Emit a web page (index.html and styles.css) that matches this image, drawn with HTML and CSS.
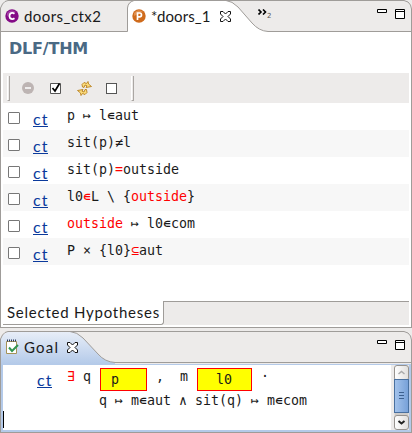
FILE: index.html
```html
<!DOCTYPE html>
<html lang="en">
<head>
<meta charset="utf-8">
<title>doors_1</title>
<link rel="stylesheet" href="styles.css">
</head>
<body>
<section class="pane editor">
  <header class="tabbar">
    <svg class="tabshape" width="412" height="33" viewBox="0 0 412 33">
      <path d="M.5 32V8L2.500 4L5 1.500L8 .5H404L408 2L410.500 5L411.500 9V32Z" fill="#edebea"/>
      <path d="M128 33V7L129.500 4L134 .5H226Q232 1 238 7L252 23Q259 31 268 31.500V33Z" fill="#fff"/>
      <path d="M.5 33V8L2.500 4L5 1.500L8 .5H404L408 2L410.500 5L411.500 9V33M1 31.500H127.500V8Q128 2 134 .5H226Q232 1 238 7L252 23Q259 31 268 31.500H411" fill="none" stroke="#9f9c99"/>
    </svg>
    <div class="tab first"><svg width="14" height="14" viewBox="0 0 14 14"><circle cx="7" cy="7" r="6.700" fill="#840b86"/><path d="M2 4Q6-1 11 3Q7 4 2 7Z" fill="#b65db8" opacity=".6"/><path d="M9.500 4.700Q7 3 5 5Q3.800 7 5 9Q7 11 9.500 9.300" fill="none" stroke="#fff" stroke-width="1.800"/></svg><span class="name ctx">doors_ctx2</span></div>
    <div class="tab second"><svg width="14" height="14" viewBox="0 0 14 14"><circle cx="7" cy="7" r="6.700" fill="#cf6b1c"/><path d="M2 4Q6-1 11 3Q7 4 2 7Z" fill="#eba873" opacity=".6"/><path d="M5.500 11V4H7.500Q9.500 4 9.500 5.900Q9.500 7.800 7.500 7.800H6" fill="none" stroke="#fff" stroke-width="1.700"/></svg><span class="name machine">*doors_1</span>
      <svg class="close" width="11" height="11" viewBox="0 0 11 11"><path d="M.5.500H3L5.500 3L8 .5H10.500V3L8 5.500L10.500 8V10.500H8L5.500 8L3 10.500H.5V8L3 5.500L.5 3Z" fill="#fff" stroke="#111"/></svg></div>
    <div class="more"><svg width="9" height="6" viewBox="0 0 9 6"><path d="M.5.500L3 3L.5 5.500M5 .5L7.500 3L5 5.500" fill="none" stroke="#000" stroke-width="1.600"/></svg><span>2</span></div>
    <svg class="controls" width="28" height="10" viewBox="0 0 28 10" fill="#fff" stroke="#000"><path d="M.5.500H9.500V3.500H.5ZM18.500.500H27.500V9.500H18.500ZM18.500 2.500H27.500"/></svg>
  </header>
  <div class="editor-body">
    <h1>DLF/THM</h1>
    <div class="toolbar">
      <i class="handle"></i>
      <svg class="minus" width="12" height="12" viewBox="0 0 12 12"><circle cx="6" cy="6" r="6" fill="#bdb4b3"/><path d="M3 6H9" stroke="#efeded" stroke-width="2"/></svg>
      <svg class="checked" width="12" height="12" viewBox="0 0 12 12"><path d="M.5 1.500H10.500V11.500H.5Z" fill="#fff" stroke="#555"/><path d="M2.500 6L5 9L9.500 1.500" fill="none" stroke="#000" stroke-width="1.700"/></svg>
      <svg class="refresh" width="15" height="15" viewBox="0 0 15 15" fill="#fbdc7c" stroke="#b9801d" stroke-width=".9"><path d="M5.500 6L5 3.500L7 1.500L9.500 2.500L11 .5L11.500 3L14.500 5.500L9 6.500L10 4.800L8 4L7 6.500Z"/><path d="M9.500 8.500L10 11.500L8 13.500L5.500 12.500L4 14.500L3.500 12L.5 9.500L6 8.500L5 10.200L7 11L8 8.500Z"/></svg>
      <i class="empty"></i>
      <i class="handle"></i>
    </div>
    <ul class="hyps">
      <li><i class="box"></i><a>ct</a><code>p ↦ l∊aut</code></li>
      <li><i class="box"></i><a>ct</a><code>sit(p)≠l</code></li>
      <li><i class="box"></i><a>ct</a><code>sit(p)<b>=</b>outside</code></li>
      <li><i class="box"></i><a>ct</a><code>l0<b>∊</b>L \ {<b>outside</b>}</code></li>
      <li><i class="box"></i><a>ct</a><code><b>outside</b> ↦ l0∊com</code></li>
      <li><i class="box"></i><a>ct</a><code>P × {l0}<b>⊆</b>aut</code></li>
    </ul>
    <footer class="pages"><span class="page">Selected Hypotheses</span><span class="rest"></span></footer>
  </div>
</section>
<section class="pane goal">
  <header class="tabbar">
    <svg class="tabshape" width="412" height="33" viewBox="0 0 412 33">
      <defs><linearGradient id="blue" x1="0" y1="0" x2="0" y2="1"><stop offset="0" stop-color="#e8eef8"/><stop offset="1" stop-color="#b4cae9"/></linearGradient></defs>
      <path d="M.5 33V8L2.500 4L5 1.500L8 .5H404L408 2L410.500 5L411.500 9V33Z" fill="#edebea"/>
      <path d="M1 33V8L3 4L8 .5H70Q77 1 83 7L98 23Q105 31 115 31.500V33Z" fill="url(#blue)"/>
      <path d="M.5 33V8L2.500 4L5 1.500L8 .5H404L408 2L410.500 5L411.500 9V33M70 .5Q77 1 83 7L98 23Q105 31 115 31.500H411" fill="none" stroke="#9f9c99"/>
    </svg>
    <div class="tab first"><svg class="note" width="13" height="16" viewBox="0 0 13 16"><path d="M.5 2.500H10.500V14.500H.5Z" fill="#fff" stroke="#a59358"/><path d="M1 1.500H11" stroke="#26375f" stroke-width="2" stroke-dasharray="1 1"/><path d="M3 8.500L6 12L12 6" fill="none" stroke="#319551" stroke-width="2"/></svg><span class="name goalname">Goal</span>
      <svg class="close" width="11" height="11" viewBox="0 0 11 11"><path d="M.5.500H3L5.500 3L8 .5H10.500V3L8 5.500L10.500 8V10.500H8L5.500 8L3 10.500H.5V8L3 5.500L.5 3Z" fill="#fff" stroke="#111"/></svg></div>
    <svg class="controls" width="28" height="10" viewBox="0 0 28 10" fill="#fff" stroke="#000"><path d="M.5.500H9.500V3.500H.5ZM18.500.500H27.500V9.500H18.500ZM18.500 2.500H27.500"/></svg>
  </header>
  <div class="goal-body">
    <div class="formula">
      <div class="line one"><a>ct</a><code><b>∃</b> q</code><span class="inst p">p</span><code class="comma">,</code><code class="m">m</code><span class="inst l0">l0</span><code class="dot">·</code></div>
      <div class="line two"><code>q ↦ m∊aut ∧ sit(q) ↦ m∊com</code></div>
      <i class="caret"></i>
    </div>
    <div class="scroll">
      <svg width="15" height="65" viewBox="0 0 15 65"><defs><linearGradient id="thumb"><stop offset="0" stop-color="#a5c4ec"/><stop offset="1" stop-color="#76a0d8"/></linearGradient><linearGradient id="btn"><stop offset="0" stop-color="#fff"/><stop offset="1" stop-color="#e1dfdd"/></linearGradient></defs>
      <path d="M.5 5H14.500V60H.5Z" fill="#d0cdca"/>
      <rect x=".5" y=".5" width="14" height="15" rx="2.500" fill="url(#btn)" stroke="#96928e"/>
      <rect x=".5" y="50.500" width="14" height="14" rx="2.500" fill="url(#btn)" stroke="#96928e"/>
      <rect x=".5" y="14.500" width="14" height="33" fill="url(#thumb)" stroke="#49709f"/>
      <path d="M5 27.500H10M5 30.500H10M5 33.500H10" stroke="#3c608f"/>
      <path d="M4.500 9L7.500 6.500L10.500 9" fill="none" stroke="#aaa" stroke-width="1.500"/><path d="M4.500 56L7.500 58.500L10.500 56" fill="none" stroke="#222" stroke-width="2"/></svg>
    </div>
  </div>
</section>
</body>
</html>
```
FILE: styles.css
```css
* { box-sizing: border-box; }
body {
  margin: 0;
  width: 412px;
  height: 433px;
  overflow: hidden;
  background: #edebea;
  color: #1a1a1a;
  font-family: Lato, "Liberation Sans", sans-serif;
}
svg { display: block; flex: none; }
.pane { width: 412px; }
.tabbar { position: relative; height: 32px; display: flex; }
.tabshape { position: absolute; left: 0; top: 0; }
.tab { position: relative; display: flex; align-items: center; height: 32px; }
.first { width: 127px; padding-left: 5px; }
.second { width: 130px; padding-left: 5px; }
.name { font-size: 15px; line-height: 20px; white-space: nowrap; }
.ctx { margin-left: 5px; letter-spacing: .45px; }
.machine { width: 60px; margin-left: 5px; letter-spacing: .1px; }
.second .close { margin-left: 9px; }
.more { position: relative; display: flex; padding: 9px 0 0 1px; }
.more span { font: 7px/10px "DejaVu Sans", sans-serif; padding-top: 2px; color: #555; }
.controls { position: relative; margin: 9px 7px 0 auto; }

.editor { height: 331px; }
.editor-body {
  height: 296px;
  display: flex;
  flex-direction: column;
  border: solid #9f9c99;
  border-width: 0 1px 1px;
  background: #fff;
  padding: 0 2px 2px;
}
h1 {
  margin: 0;
  height: 41px;
  padding: 7px 0 0 6px;
  font: bold 16px/20px "DejaVu Sans", sans-serif;
  letter-spacing: -.2px;
  color: #4a6984;
}
.toolbar {
  height: 30px;
  flex: none;
  display: flex;
  align-items: center;
  background: #edebea;
}
.handle {
  width: 3px;
  height: 25px;
  margin-left: 4px;
  border: 1px solid #aaa6a3;
  border-left-color: #fff;
  border-top: 0;
}
.minus { margin-left: 12px; }
.checked { margin-left: 16px; }
.refresh { margin-left: 15px; }
.empty { width: 11px; height: 11px; margin-left: 14px; border: 1px solid #555; background: #fff; }
.empty + .handle { margin-left: 14px; }
.hyps { margin: 0; padding: 0; list-style: none; }
.hyps li { height: 27px; display: flex; }
.hyps li:nth-child(even) { background: #f7f7f7; }
.box {
  width: 12px;
  height: 12px;
  margin: 9px 13px 0 5px;
  border: 1px solid #777;
  border-radius: 1px;
  background: #fff;
}
a {
  width: 15px;
  height: 18px;
  font-size: 16px;
  line-height: 19px;
  letter-spacing: 1px;
  white-space: nowrap;
  color: #0b3a9c;
  border-bottom: 1px solid #0b3a9c;
}
.hyps a { margin: 6px 19px 0 0; }
code {
  font: 13.3px/18px "DejaVu Sans Mono", monospace;
  letter-spacing: -.007px;
  white-space: pre;
}
.hyps code { padding-top: 4px; }
b { font-weight: normal; color: #f00; }
.pages { height: 24px; margin-top: auto; display: flex; }
.page {
  width: 161px;
  padding-left: 4px;
  font-size: 15px;
  line-height: 22px;
  letter-spacing: .76px;
  white-space: nowrap;
  border: solid #9f9c99;
  border-width: 0 1px 1px 0;
  border-radius: 0 0 3px 0;
}
.rest { flex: 1; background: #edebea; border-top: 1px solid #9f9c99; }

.goal { height: 102px; }
.note { margin-left: 1px; }
.goalname { width: 37px; margin-left: 5px; letter-spacing: 1.2px; }
.goal .close { margin-left: 6px; }
.goal-body {
  height: 70px;
  display: flex;
  border: 1px solid #9f9c99;
  border-top: 0;
  background: #b4cae9;
  padding: 2px 2px 2px;
}
.formula { position: relative; width: 388px; height: 65px; background: #fff; }
.line { display: flex; }
.one { height: 27px; padding: 3px 0 0 34px; }
.one a { margin-top: 2px; }
.one > code { margin-left: 15px; }
.inst {
  height: 23px;
  border: 1px solid #f00;
  background: #ff0;
  font: 13.3px/22px "DejaVu Sans Mono", monospace;
}
.inst.p { width: 47px; padding-left: 10px; margin-left: 9px; }
.inst.l0 { width: 55px; padding-left: 18px; margin-left: 9px; }
.one .comma { margin-left: 9px; }
.one .m { margin-left: 16px; }
.one .dot { margin-left: 9px; }
.two { padding-left: 96px; }
.caret { position: absolute; left: 0; bottom: 2px; width: 1px; height: 17px; background: #000; }
.scroll { flex: 1; display: flex; justify-content: flex-end; background: #edebea; }
```
